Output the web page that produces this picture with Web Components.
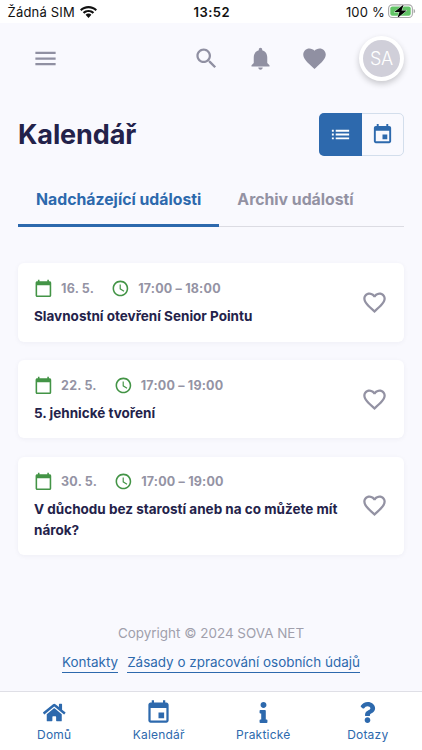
<!DOCTYPE html>
<html lang="cs">
<head>
<meta charset="utf-8">
<meta name="viewport" content="width=device-width, initial-scale=1">
<title>Kalendář</title>
<style>
  body {
    margin: 0;
    font-family: Inter, "Liberation Sans", sans-serif;
  }
</style>
</head>
<body>
<calendar-app></calendar-app>

<script>
const ICONS = {
  menu: ["0 0 24 24", `<path d="M3 18h18v-2H3v2zm0-5h18v-2H3v2zm0-7v2h18V6H3z"/>`],
  search: ["0 0 24 24", `<path d="M15.5 14h-.79l-.28-.27C15.41 12.59 16 11.11 16 9.5 16 5.91 13.09 3 9.5 3S3 5.91 3 9.5 5.91 16 9.5 16c1.61 0 3.09-.59 4.23-1.57l.27.28v.79l5 4.99L20.49 19l-4.99-5zm-6 0C7.01 14 5 11.99 5 9.5S7.01 5 9.5 5 14 7.01 14 9.5 11.99 14 9.5 14z"/>`],
  bell: ["0 0 24 24", `<path d="M12 22c1.1 0 2-.9 2-2h-4c0 1.1.89 2 2 2zm6-6v-5c0-3.07-1.64-5.64-4.5-6.32V4c0-.83-.67-1.5-1.5-1.5s-1.5.67-1.5 1.5v.68C7.63 5.36 6 7.92 6 11v5l-2 2v1h16v-1l-2-2z"/>`],
  heart: ["0 0 24 24", `<path d="m12 21.35-1.45-1.32C5.4 15.36 2 12.28 2 8.5 2 5.42 4.42 3 7.5 3c1.74 0 3.41.81 4.5 2.09C13.09 3.81 14.76 3 16.5 3 19.58 3 22 5.42 22 8.5c0 3.78-3.4 6.86-8.55 11.54L12 21.35z"/>`],
  "heart-outline": ["0 0 24 24", `<path d="M16.5 3c-1.74 0-3.41.81-4.5 2.09C10.91 3.81 9.24 3 7.5 3 4.42 3 2 5.42 2 8.5c0 3.78 3.4 6.86 8.55 11.54L12 21.35l1.45-1.32C18.6 15.36 22 12.28 22 8.5 22 5.42 19.58 3 16.5 3zm-4.4 15.55-.1.1-.1-.1C7.14 14.24 4 11.39 4 8.5 4 6.5 5.5 5 7.5 5c1.54 0 3.04.99 3.57 2.36h1.87C13.46 5.99 14.96 5 16.5 5c2 0 3.5 1.5 3.5 3.5 0 2.89-3.14 5.74-7.9 10.05z"/>`],
  list: ["0 0 24 24", `<path d="M3 13h2v-2H3v2zm0 4h2v-2H3v2zm0-8h2V7H3v2zm4 4h14v-2H7v2zm0 4h14v-2H7v2zM7 7v2h14V7H7z"/>`],
  event: ["0 0 24 24", `<path d="M17 12h-5v5h5v-5zM16 1v2H8V1H6v2H5c-1.11 0-1.99.9-1.99 2L3 19c0 1.1.89 2 2 2h14c1.1 0 2-.9 2-2V5c0-1.1-.9-2-2-2h-1V1h-2zm3 18H5V8h14v11z"/>`],
  day: ["0 0 24 24", `<path d="M20 3h-1V1h-2v2H7V1H5v2H4c-1.1 0-2 .9-2 2v16c0 1.1.9 2 2 2h16c1.1 0 2-.9 2-2V5c0-1.1-.9-2-2-2zm0 18H4V8h16v13z"/>`],
  clock: ["0 0 24 24", `<path d="M11.99 2C6.47 2 2 6.48 2 12s4.47 10 9.99 10C17.52 22 22 17.52 22 12S17.52 2 11.99 2zM12 20c-4.42 0-8-3.58-8-8s3.58-8 8-8 8 3.58 8 8-3.58 8-8 8zm.5-13H11v6l5.25 3.15.75-1.23-4.5-2.67z"/>`],
  home: ["0 0 576 512", `<path d="M280.37 148.26 96 300.11V464a16 16 0 0 0 16 16l112.06-.29a16 16 0 0 0 15.92-16V368a16 16 0 0 1 16-16h64a16 16 0 0 1 16 16v95.64a16 16 0 0 0 16 16.05L464 480a16 16 0 0 0 16-16V300L295.67 148.26a12.19 12.19 0 0 0-15.3 0zM571.6 251.47 488 182.56V44.05a12 12 0 0 0-12-12h-56a12 12 0 0 0-12 12v72.61L318.47 43a48 48 0 0 0-61 0L4.34 251.47a12 12 0 0 0-1.6 16.9l25.5 31A12 12 0 0 0 45.15 301l235.22-193.74a12.19 12.19 0 0 1 15.3 0L530.9 301a12 12 0 0 0 16.9-1.6l25.5-31a12 12 0 0 0-1.7-16.93z"/>`],
  info: ["0 0 192 512", `<path d="M20 424.229h20V279.771H20c-11.046 0-20-8.954-20-20V212c0-11.046 8.954-20 20-20h112c11.046 0 20 8.954 20 20v212.229h20c11.046 0 20 8.954 20 20V492c0 11.046-8.954 20-20 20H20c-11.046 0-20-8.954-20-20v-47.771c0-11.046 8.954-20 20-20zM96 0C56.235 0 24 32.235 24 72s32.235 72 72 72 72-32.235 72-72S135.764 0 96 0z"/>`],
  question: ["0 0 384 512", `<path d="M202.021 0C122.202 0 70.503 32.703 29.914 91.026c-7.363 10.58-5.093 25.086 5.178 32.874l43.138 32.709c10.373 7.865 25.132 6.026 33.253-4.148 25.049-31.381 43.63-49.449 82.757-49.449 30.764 0 68.816 19.799 68.816 49.631 0 22.552-18.617 34.134-48.993 51.164-35.423 19.86-82.299 44.576-82.299 106.405V320c0 13.255 10.745 24 24 24h72.471c13.255 0 24-10.745 24-24v-5.773c0-42.86 125.268-44.645 125.268-160.627C377.504 66.256 286.902 0 202.021 0zM192 373.459c-38.196 0-69.271 31.075-69.271 69.271 0 38.195 31.075 69.27 69.271 69.27s69.271-31.075 69.271-69.271-31.075-69.27-69.271-69.27z"/>`],
  wifi: ["0 0 17 12", `<path d="M8.5 0C5.2 0 2.2 1.3 0 3.4l1.5 1.6C3.3 3.2 5.8 2.2 8.5 2.2s5.2 1 7 2.8L17 3.4C14.8 1.3 11.8 0 8.5 0zM8.5 3.9c-2.2 0-4.2.8-5.7 2.3l1.6 1.6c1.1-1 2.5-1.7 4.1-1.7s3 .7 4.1 1.7l1.6-1.6c-1.5-1.5-3.5-2.3-5.7-2.3zM8.5 7.6c-1.1 0-2.1.5-2.9 1.2L8.5 12l2.9-3.2c-.8-.7-1.8-1.2-2.9-1.2z"/>`],
  battery: ["0 0 28 15", `<rect x=".6" y=".9" width="23.8" height="12.6" rx="3.6" fill="#fff" stroke="#a9a9a9" stroke-width="1.1"/><rect x="2.3" y="2.6" width="20.4" height="9.2" rx="2" fill="#62c466"/><path d="M25.6 5v4.3c1-.3 1.5-1.2 1.5-2.15S26.6 5.3 25.6 5z" fill="#a9a9a9"/><path d="M15.7.6 6.3 8h5.2L9.4 13.9 18.7 6.5h-5.2z" fill="#000" stroke="#fff" stroke-width=".8" paint-order="stroke"/>`]
};

class UiIcon extends HTMLElement {
  constructor() {
    super();
    this.attachShadow({ mode: "open" });
  }

  connectedCallback() {
    const [viewBox, shape] = ICONS[this.getAttribute("name")];
    this.shadowRoot.innerHTML = /* html */`
    <style>
      :host { display: inline-flex; flex: none; width: 24px; height: 24px; }
      svg { width: 100%; height: 100%; fill: currentColor; }
    </style>
    <svg viewBox="${viewBox}" aria-hidden="true">${shape}</svg>`;
  }
}

class StatusBar extends HTMLElement {
  constructor() {
    super();
    this.attachShadow({ mode: "open" });
    this.shadowRoot.innerHTML = /* html */`
    <style>
      :host {
        display: grid;
        grid-template-columns: 1fr auto 1fr;
        align-items: center;
        height: 23px;
        padding: 0 6px 0 7.5px;
        background: #fff;
        color: #111;
        font-size: 13px;
      }
      .side { display: flex; align-items: center; gap: 5px; }
      .end { justify-content: flex-end; gap: 3px; }
      .carrier { letter-spacing: 0.2px; }
      .percent { letter-spacing: 0.2px; }
      .time { font-weight: 600; letter-spacing: 0.5px; }
      .wifi { width: 17px; height: 12px; }
      .battery { width: 28px; height: 15px; }
    </style>
    <div class="side"><span class="carrier">Žádná SIM</span><ui-icon class="wifi" name="wifi"></ui-icon></div>
    <span class="time">13:52</span>
    <div class="side end"><span class="percent">100 %</span><ui-icon class="battery" name="battery"></ui-icon></div>`;
  }
}

class AppHeader extends HTMLElement {
  constructor() {
    super();
    this.attachShadow({ mode: "open" });
    this.shadowRoot.innerHTML = /* html */`
    <style>
      :host {
        display: flex;
        align-items: center;
        justify-content: space-between;
        height: 71.5px;
        padding: 0 18px 0 31.5px;
        color: #9090a2;
      }
      ui-icon { width: 27px; height: 27px; }
      nav { display: flex; align-items: center; gap: 27px; }
      .avatar {
        box-sizing: border-box;
        width: 45px;
        height: 45px;
        margin-left: 4.5px;
        border: 4.5px solid #fff;
        border-radius: 50%;
        background: #d0cfd9;
        box-shadow: 0 3px 6px #0003;
        color: #fff;
        font-size: 18px;
        font-weight: 300;
        letter-spacing: -0.3px;
        line-height: 37px;
        text-align: center;
      }
    </style>
    <ui-icon name="menu"></ui-icon>
    <nav>
      <ui-icon name="search"></ui-icon>
      <ui-icon name="bell"></ui-icon>
      <ui-icon name="heart"></ui-icon>
      <div class="avatar">SA</div>
    </nav>`;
  }
}

class ViewToggle extends HTMLElement {
  constructor() {
    super();
    this.attachShadow({ mode: "open" });
    this.shadowRoot.innerHTML = /* html */`
    <style>
      :host {
        box-sizing: border-box;
        display: grid;
        grid-template-columns: 1fr 1fr;
        width: 85px;
        height: 43px;
        border: 1px solid #d3deec;
        border-radius: 5px;
        color: #2d69ad;
      }
      div { display: flex; align-items: center; justify-content: center; }
      .active {
        margin: -1px 0 -1px -1px;
        border-radius: 5px 0 0 5px;
        background: #2d69ad;
        color: #fff;
      }
      ui-icon { width: 23px; height: 23px; }
    </style>
    <div class="active"><ui-icon name="list"></ui-icon></div>
    <div><ui-icon name="event"></ui-icon></div>`;
  }
}

class TabBar extends HTMLElement {
  constructor() {
    super();
    this.attachShadow({ mode: "open" });
    this.shadowRoot.innerHTML = /* html */`
    <style>
      :host {
        display: flex;
        box-sizing: border-box;
        height: 53px;
        box-shadow: inset 0 -1px #dcdce3;
      }
      ::slotted(*) {
        box-sizing: border-box;
        padding: 16px 18px 0;
        color: #9392a3;
        font-size: 15.8px;
        font-weight: 700;
        line-height: 20px;
        white-space: nowrap;
      }
      ::slotted([selected]) {
        border-bottom: 3px solid #2d69ad;
        color: #2d69ad;
      }
    </style>
    <slot></slot>`;
  }
}

class EventCard extends HTMLElement {
  constructor() {
    super();
    this.attachShadow({ mode: "open" });
  }

  connectedCallback() {
    this.shadowRoot.innerHTML = /* html */`
    <style>
      :host {
        display: flex;
        align-items: center;
        justify-content: space-between;
        box-sizing: border-box;
        padding: 15px 16px;
        border-radius: 6px;
        background: #fff;
        box-shadow: 0 1px 5px #22224a0d;
      }
      .meta {
        display: flex;
        align-items: center;
        height: 20px;
        color: #9493a4;
        font-size: 12.5px;
        font-weight: 700;
        letter-spacing: 0.2px;
      }
      .meta ui-icon { width: 18.8px; height: 18.8px; color: #439446; }
      .meta span { margin: 0 17px 0 8.3px; }
      .title {
        margin-top: 7.5px;
        color: #23224a;
        font-size: 13.5px;
        font-weight: 700;
        line-height: 20.5px;
      }
      .like { width: 27px; height: 27px; color: #9392a3; }
    </style>
    <div>
      <div class="meta">
        <ui-icon name="day"></ui-icon><span>${this.getAttribute("date")}</span>
        <ui-icon name="clock"></ui-icon><span>${this.getAttribute("time")}</span>
      </div>
      <div class="title"><slot></slot></div>
    </div>
    <ui-icon class="like" name="heart-outline"></ui-icon>`;
  }
}

class AppFooter extends HTMLElement {
  constructor() {
    super();
    this.attachShadow({ mode: "open" });
    this.shadowRoot.innerHTML = /* html */`
    <style>
      :host { display: block; font-size: 13.45px; line-height: 18px; text-align: center; }
      .copy { color: #a09fac; }
      .links { display: flex; justify-content: center; gap: 9px; margin-top: 12px; }
      a { border-bottom: 1px solid #2d69ad; color: #2d69ad; text-decoration: none; line-height: 17.5px; }
    </style>
    <div class="copy">Copyright © 2024 SOVA NET</div>
    <div class="links"><a>Kontakty</a><a>Zásady o zpracování osobních údajů</a></div>`;
  }
}

class BottomNav extends HTMLElement {
  constructor() {
    super();
    this.attachShadow({ mode: "open" });
    this.shadowRoot.innerHTML = /* html */`
    <style>
      :host {
        display: grid;
        grid-template-columns: repeat(4, 1fr);
        box-sizing: border-box;
        height: 59px;
        padding: 0 2px;
        border-top: 1px solid #dfdfe6;
        background: #fff;
      }
    </style>
    <slot></slot>`;
  }
}

class NavItem extends HTMLElement {
  constructor() {
    super();
    this.attachShadow({ mode: "open" });
  }

  connectedCallback() {
    this.shadowRoot.innerHTML = /* html */`
    <style>
      :host {
        display: flex;
        flex-direction: column;
        align-items: center;
        color: #2d69ad;
        font-size: 12px;
        line-height: 16px;
        letter-spacing: 0.2px;
      }
      .icon { display: flex; align-items: center; height: 35px; padding-bottom: 2px; box-sizing: border-box; }
      [name="home"] { width: 22.5px; height: 21px; margin-top: 7px; }
      [name="event"] { width: 27px; height: 27px; margin-top: 7px; }
      [name="info"], [name="question"] { width: 21px; height: 21px; margin-top: 8px; }
    </style>
    <div class="icon"><ui-icon name="${this.getAttribute("icon")}"></ui-icon></div>
    <slot></slot>`;
  }
}

class CalendarApp extends HTMLElement {
  constructor() {
    super();
    this.attachShadow({ mode: "open" });
  }

  connectedCallback() {
    this.shadowRoot.innerHTML = /* html */`
    <style>
      :host {
        display: flex;
        flex-direction: column;
        height: 100vh;
        overflow: hidden;
        background: #f9f9fe;
      }
      main { flex: 1; padding: 18px 18px 0; }
      .heading { display: flex; align-items: center; justify-content: space-between; }
      h1 {
        margin: 0;
        padding-top: 1px;
        color: #23224a;
        font-size: 27px;
        font-weight: 700;
        line-height: 36px;
        letter-spacing: -0.1px;
      }
      tab-bar { margin-top: 18.5px; }
      .events { display: grid; gap: 18.3px; margin-top: 36px; }
      event-card { min-height: 78.5px; }
      app-footer { margin-bottom: 18.5px; }
    </style>
    <status-bar></status-bar>
    <app-header></app-header>
    <main>
      <div class="heading"><h1>Kalendář</h1><view-toggle></view-toggle></div>
      <tab-bar>
        <div selected>Nadcházející události</div>
        <div>Archiv událostí</div>
      </tab-bar>
      <div class="events">
        <event-card date="16. 5." time="17:00 – 18:00">Slavnostní otevření Senior Pointu</event-card>
        <event-card date="22. 5." time="17:00 – 19:00">5. jehnické tvoření</event-card>
        <event-card date="30. 5." time="17:00 – 19:00">V důchodu bez starostí aneb na co můžete mít nárok?</event-card>
      </div>
    </main>
    <app-footer></app-footer>
    <bottom-nav>
      <nav-item icon="home">Domů</nav-item>
      <nav-item icon="event">Kalendář</nav-item>
      <nav-item icon="info">Praktické</nav-item>
      <nav-item icon="question">Dotazy</nav-item>
    </bottom-nav>`;
  }
}

customElements.define("ui-icon", UiIcon);
customElements.define("status-bar", StatusBar);
customElements.define("app-header", AppHeader);
customElements.define("view-toggle", ViewToggle);
customElements.define("tab-bar", TabBar);
customElements.define("event-card", EventCard);
customElements.define("app-footer", AppFooter);
customElements.define("bottom-nav", BottomNav);
customElements.define("nav-item", NavItem);
customElements.define("calendar-app", CalendarApp);
</script>
</body>
</html>
